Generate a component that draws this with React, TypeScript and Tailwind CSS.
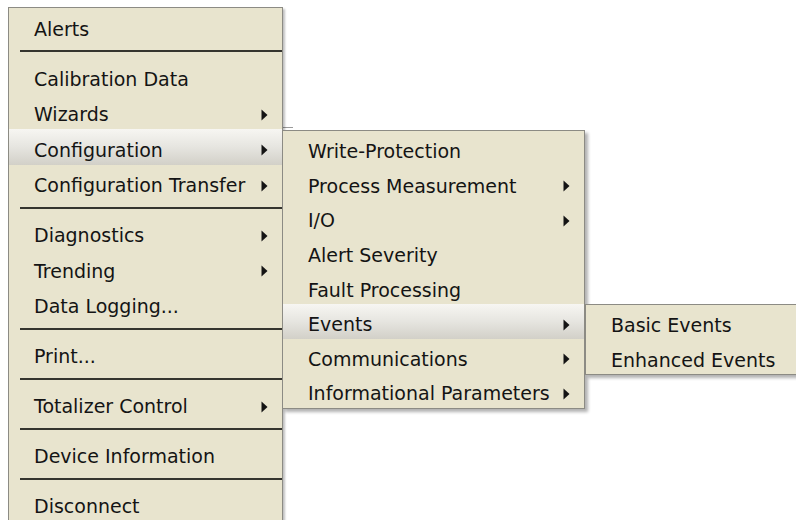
import clsx from "clsx";

type Entry = { label: string; sub?: boolean; active?: boolean } | "sep";

const mainMenu: Entry[] = [
  { label: "Alerts" },
  "sep",
  { label: "Calibration Data" },
  { label: "Wizards", sub: true },
  { label: "Configuration", sub: true, active: true },
  { label: "Configuration Transfer", sub: true },
  "sep",
  { label: "Diagnostics", sub: true },
  { label: "Trending", sub: true },
  { label: "Data Logging..." },
  "sep",
  { label: "Print..." },
  "sep",
  { label: "Totalizer Control", sub: true },
  "sep",
  { label: "Device Information" },
  "sep",
  { label: "Disconnect" },
];

const configMenu: Entry[] = [
  { label: "Write-Protection" },
  { label: "Process Measurement", sub: true },
  { label: "I/O", sub: true },
  { label: "Alert Severity" },
  { label: "Fault Processing" },
  { label: "Events", sub: true, active: true },
  { label: "Communications", sub: true },
  { label: "Informational Parameters", sub: true },
];

const eventsMenu: Entry[] = [{ label: "Basic Events" }, { label: "Enhanced Events" }];

function Arrow() {
  return (
    <svg width="7" height="12" viewBox="0 0 7 12" className="shrink-0">
      <path d="M0.5 0.5 L6.5 6 L0.5 11.5 Z" fill="#141414" />
    </svg>
  );
}

function MenuList({ items, rowH }: { items: Entry[]; rowH: "main" | "sub" }) {
  return (
    <>
      {items.map((item, i) =>
        item === "sep" ? (
          <div key={i} className="h-[14.5px] pt-[6.5px] pl-[11px]">
            <div className="h-[2px] bg-[#35352f]" />
          </div>
        ) : (
          <div
            key={i}
            className={clsx(
              "flex items-center pt-[7px] pl-[25px] pr-[14px] whitespace-nowrap",
              rowH === "main" ? "h-[35.5px]" : "h-[34.6px]",
              item.active && "bg-linear-to-b from-[#f7f6f2] via-[#e6e5e0] to-[#d2d0c8]"
            )}
          >
            <span className="flex-1">{item.label}</span>
            {item.sub && <Arrow />}
          </div>
        )
      )}
    </>
  );
}

export default function App() {
  return (
    <div className="relative w-[796px] h-[520px] overflow-hidden bg-white text-[19px] leading-none text-[#141414] font-['DejaVu_Sans',sans-serif]">
      {/* bits of the window behind the menus */}
      <div className="absolute left-[283px] top-[127px] w-[10px] h-[1px] bg-[#9a9a9a]" />
      <div className="absolute left-[284px] top-[302px] w-[10px] h-[38px] bg-[#eeeeee]" />

      {/* main context menu */}
      <div className="absolute left-[8px] top-[7px] w-[275px] h-[530px] bg-[#e8e4ce] border border-[#8c8b84] shadow-[2px_2px_2px_rgba(0,0,0,0.25)]">
        <MenuList items={mainMenu} rowH="main" />
      </div>

      {/* Configuration submenu */}
      <div className="absolute left-[282px] top-[130px] w-[303px] bg-[#e8e4ce] border border-[#8c8b84] shadow-[3px_3px_3px_rgba(0,0,0,0.3)]">
        <MenuList items={configMenu} rowH="sub" />
      </div>

      {/* Events submenu */}
      <div className="absolute left-[585px] top-[304px] w-[230px] bg-[#e8e4ce] border border-[#8c8b84] shadow-[3px_3px_3px_rgba(0,0,0,0.3)]">
        <MenuList items={eventsMenu} rowH="sub" />
      </div>
    </div>
  );
}
